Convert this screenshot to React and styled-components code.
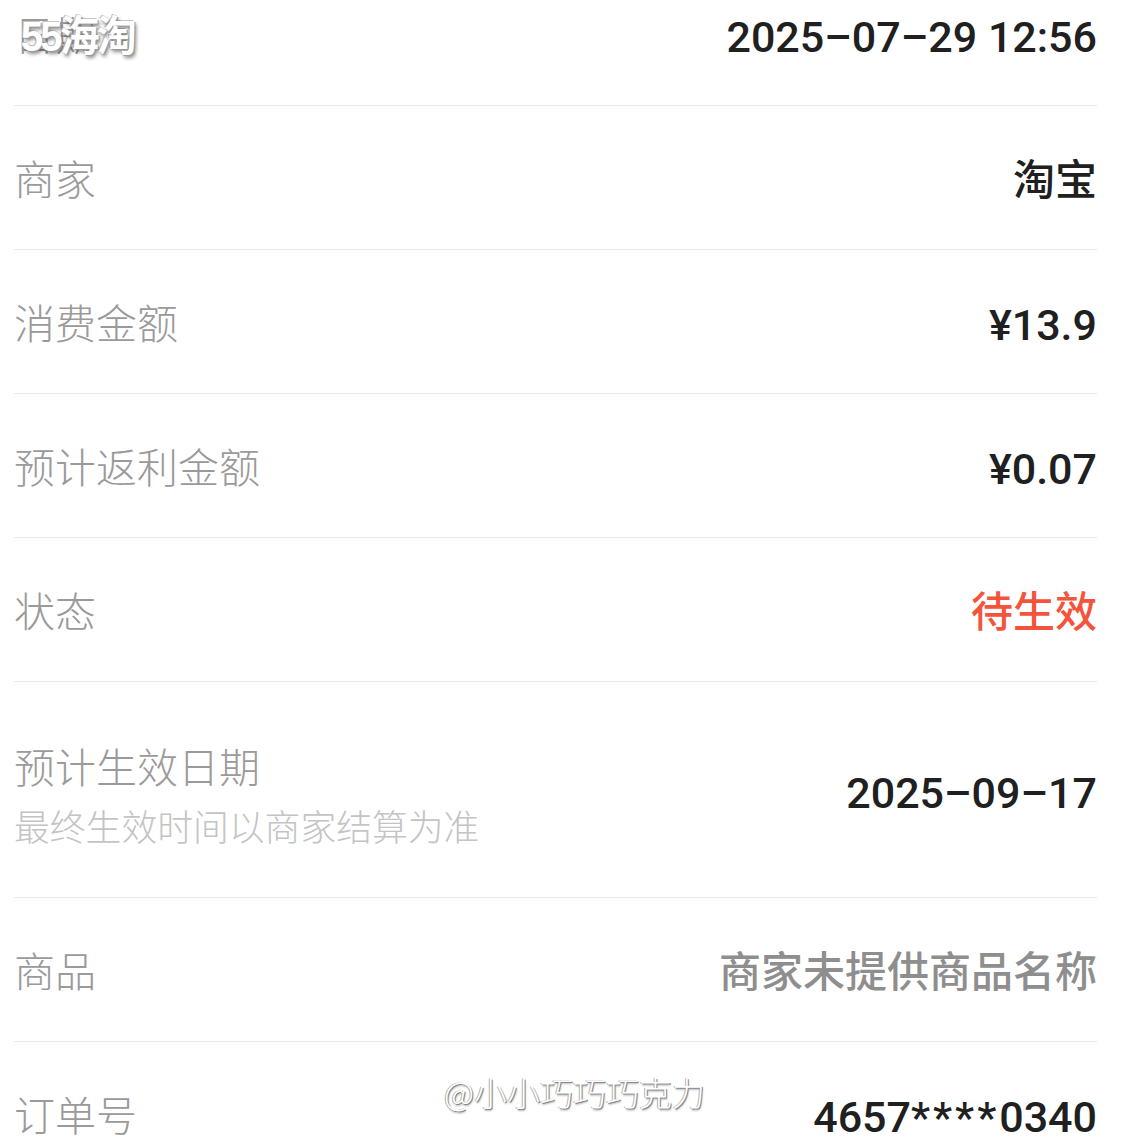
import React from "react";
import styled, { createGlobalStyle } from "styled-components";

const Global = createGlobalStyle`
  html, body { margin: 0; padding: 0; background: #ffffff; overflow: hidden; }
  body { font-family: "Noto Sans CJK SC", sans-serif; }
`;

const Screen = styled.div`
  position: relative;
  width: 1145px;
  height: 1145px;
  overflow: hidden;
  background: #fff;
`;

const List = styled.div`
  margin-top: -38px;
  padding: 0 48px 0 14px;
`;

const Row = styled.div`
  box-sizing: border-box;
  height: ${(p) => (p.$tall ? 216 : 144)}px;
  display: flex;
  align-items: center;
  justify-content: space-between;
  padding: 0;
  border-bottom: 1px solid #e9e9e9;
`;

const LabelCol = styled.div`
  display: flex;
  flex-direction: column;
  gap: 13px;
  padding-top: ${(p) => (p.$tall ? 9 : 0)}px;
`;

const Label = styled.div`
  font-family: "Noto Sans CJK SC", sans-serif;
  font-weight: 300;
  font-size: 41px;
  line-height: 1.2;
  color: #9a9a9a;
`;

const Sub = styled.div`
  font-family: "Noto Sans CJK SC", sans-serif;
  font-weight: 300;
  font-size: 35.8px;
  line-height: 1.2;
  color: #c4c4c4;
`;

const tones = {
  dark: "#202020",
  red: "#f4533c",
  gray: "#8e8e8e",
};

const Value = styled.div`
  padding-top: 8px;
  font-family: "Roboto", "Liberation Sans", "Noto Sans CJK SC", sans-serif;
  font-weight: 500;
  font-size: ${(p) => (p.$num ? 43 : 42)}px;
  letter-spacing: 0;
  line-height: 1.2;
  color: ${(p) => tones[p.$tone || "dark"]};
  white-space: nowrap;
`;

const Star = styled.span`
  letter-spacing: 3px;
`;

const LogoMark = styled.div`
  position: absolute;
  left: 21px;
  top: 14px;
  font-family: "Liberation Sans", "Noto Sans CJK SC", sans-serif;
  font-weight: 700;
  font-size: 42px;
  letter-spacing: -3px;
  line-height: 1.1;
  color: #ffffff;
  transform: scaleX(0.95);
  transform-origin: left center;
  text-shadow: 1px 1px 0 #9a9a9a, 2px 3px 4px rgba(0, 0, 0, 0.45),
    -1px -1px 0 #c8c8c8;
`;

const Credit = styled.div`
  position: absolute;
  left: 444px;
  top: 1073px;
  font-family: "Noto Sans CJK SC", sans-serif;
  font-weight: 300;
  font-size: 33px;
  letter-spacing: 0px;
  line-height: 1.2;
  color: #ffffff;
  text-shadow: 1px 1px 0 #8a8a8a, -1px 0 0 #b0b0b0, 1px 2px 2px rgba(0, 0, 0, 0.3);
`;

const rows = [
  { label: "日期", value: "2025–07–29 12:56", num: true },
  { label: "商家", value: "淘宝" },
  { label: "消费金额", value: "¥13.9", num: true },
  { label: "预计返利金额", value: "¥0.07", num: true },
  { label: "状态", value: "待生效", tone: "red" },
  {
    label: "预计生效日期",
    sub: "最终生效时间以商家结算为准",
    value: "2025–09–17",
    num: true,
    tall: true,
  },
  { label: "商品", value: "商家未提供商品名称", tone: "gray" },
  {
    label: "订单号",
    value: (
      <>
        4657<Star>****</Star>0340
      </>
    ),
    num: true,
  },
];

export default function App() {
  return (
    <Screen>
      <Global />
      <List>
        {rows.map((r) => (
          <Row key={r.label} $tall={r.tall}>
            <LabelCol $tall={r.tall}>
              <Label>{r.label}</Label>
              {r.sub && <Sub>{r.sub}</Sub>}
            </LabelCol>
            <Value $tone={r.tone} $num={r.num}>
              {r.value}
            </Value>
          </Row>
        ))}
      </List>
      <LogoMark>55海淘</LogoMark>
      <Credit>@小小巧巧巧克力</Credit>
    </Screen>
  );
}
